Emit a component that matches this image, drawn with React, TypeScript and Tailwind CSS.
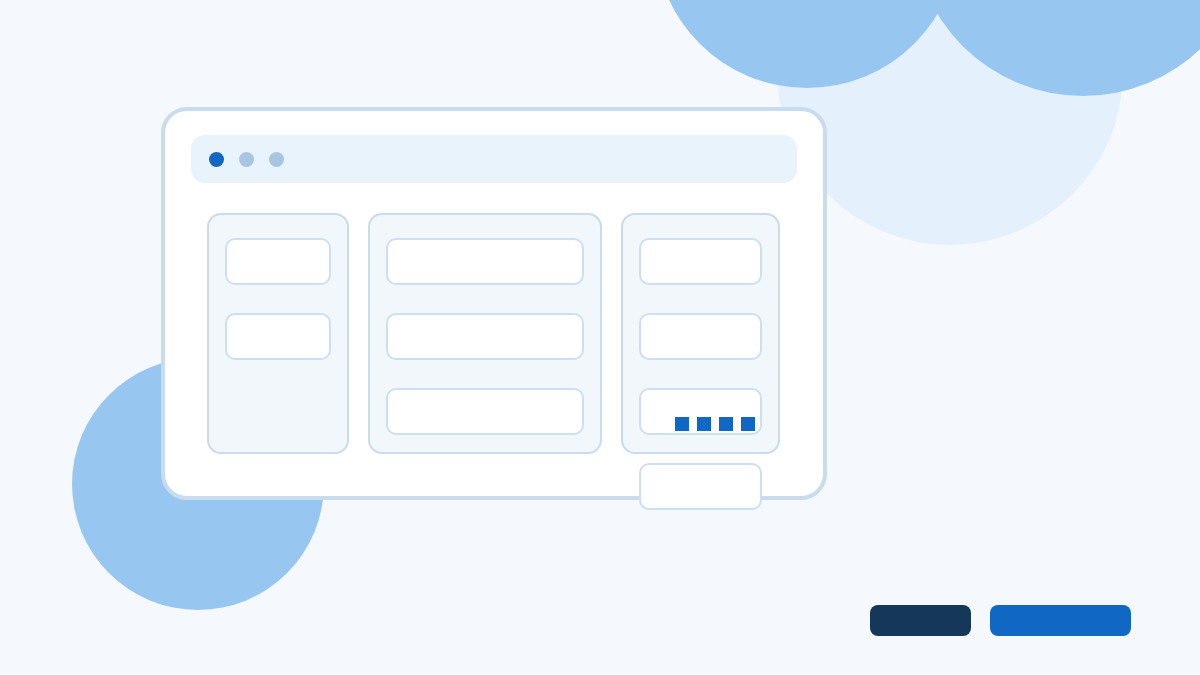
export default function App() {
  const card = "h-[47px] shrink-0 rounded-[10px] border-2 border-[#cde0f1] bg-white";
  const column =
    "h-[241px] shrink-0 rounded-[14px] border-2 border-[#c8dcee] bg-[#f2f7fc] px-[16px] pt-[23px] flex flex-col gap-[28px]";

  return (
    <div className="relative w-[1200px] h-[675px] overflow-hidden bg-[#f5f9fe] font-['Liberation_Sans',sans-serif]">
      {/* background blobs */}
      <div className="absolute left-[777px] top-[-101px] w-[346px] h-[346px] rounded-full bg-[#e4f0fc]" />
      <div className="absolute left-[655px] top-[-216px] w-[304px] h-[304px] rounded-full bg-[#97c7f1]" />
      <div className="absolute left-[913px] top-[-244px] w-[340px] h-[340px] rounded-full bg-[#97c7f1]" />
      <div className="absolute left-[72px] top-[358px] w-[252px] h-[252px] rounded-full bg-[#97c7f1]" />

      {/* browser window */}
      <div className="relative z-10 ml-[161px] pt-[107px]">
        <div className="w-[666px] h-[393px] rounded-[26px] border-4 border-[#c8dcee] bg-white px-[26px] pt-[24px]">
          <div className="h-[48px] rounded-[14px] bg-[#e8f3fc] flex items-center gap-[15px] pl-[18px]">
            <span className="w-[15px] h-[15px] rounded-full bg-[#1068c4]" />
            <span className="w-[15px] h-[15px] rounded-full bg-[#a8c6e1]" />
            <span className="w-[15px] h-[15px] rounded-full bg-[#a8c6e1]" />
          </div>

          <div className="mt-[30px] mx-[16px] flex items-start gap-[19px]">
            <div className={`${column} w-[142px]`}>
              <div className={card} />
              <div className={card} />
            </div>
            <div className={`${column} w-[234px]`}>
              <div className={card} />
              <div className={card} />
              <div className={card} />
            </div>
            <div className={`${column} w-[159px]`}>
              <div className={card} />
              <div className={card} />
              <div className={`${card} flex items-end justify-end gap-[8px] pr-[5px] pb-[2px]`}>
                <span className="w-[14px] h-[14px] bg-[#1068c4]" />
                <span className="w-[14px] h-[14px] bg-[#1068c4]" />
                <span className="w-[14px] h-[14px] bg-[#1068c4]" />
                <span className="w-[14px] h-[14px] bg-[#1068c4]" />
              </div>
              <div className={card} />
            </div>
          </div>
        </div>
      </div>

      {/* action buttons */}
      <div className="relative z-10 mt-[105px] pr-[69px] flex justify-end gap-[19px]">
        <button className="w-[101px] h-[31px] rounded-[8px] bg-[#14375a]" />
        <button className="w-[141px] h-[31px] rounded-[8px] bg-[#1068c4]" />
      </div>
    </div>
  );
}
